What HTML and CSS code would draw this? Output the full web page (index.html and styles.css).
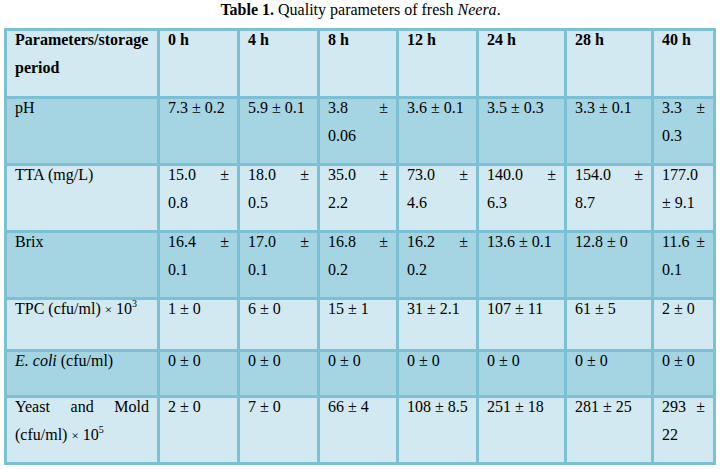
FILE: index.html
```html
<!DOCTYPE html>
<html lang="en">
<head>
  <meta charset="UTF-8" />
  <meta name="viewport" content="width=device-width, initial-scale=1.0" />
  <title>Table 1. Quality parameters of fresh Neera</title>
  <link rel="stylesheet" href="styles.css">
</head>
<body>
  <div class="page">
    <p class="caption"><strong>Table 1.</strong> Quality parameters of fresh <em>Neera</em>.</p>

    <table class="quality">
      <colgroup>
        <col class="c-param">
        <col class="c-77"><col class="c-77"><col class="c-76"><col class="c-77">
        <col class="c-85"><col class="c-84"><col class="c-59">
      </colgroup>
      <tr class="head tall">
        <th><p>Parameters/storage period</p></th>
        <th><p>0 h</p></th>
        <th><p>4 h</p></th>
        <th><p>8 h</p></th>
        <th><p>12 h</p></th>
        <th><p>24 h</p></th>
        <th><p>28 h</p></th>
        <th><p>40 h</p></th>
      </tr>
      <tr class="dark tall">
        <td><p>pH</p></td>
        <td><p>7.3 ± 0.2</p></td>
        <td><p>5.9 ± 0.1</p></td>
        <td><p>3.8 ± 0.06</p></td>
        <td><p>3.6 ± 0.1</p></td>
        <td><p>3.5 ± 0.3</p></td>
        <td><p>3.3 ± 0.1</p></td>
        <td><p>3.3 ± 0.3</p></td>
      </tr>
      <tr class="light tall">
        <td><p>TTA (mg/L)</p></td>
        <td><p>15.0 ± 0.8</p></td>
        <td><p>18.0 ± 0.5</p></td>
        <td><p>35.0 ± 2.2</p></td>
        <td><p>73.0 ± 4.6</p></td>
        <td><p>140.0 ± 6.3</p></td>
        <td><p>154.0 ± 8.7</p></td>
        <td><p>177.0 ± 9.1</p></td>
      </tr>
      <tr class="dark tall">
        <td><p>Brix</p></td>
        <td><p>16.4 ± 0.1</p></td>
        <td><p>17.0 ± 0.1</p></td>
        <td><p>16.8 ± 0.2</p></td>
        <td><p>16.2 ± 0.2</p></td>
        <td><p>13.6 ± 0.1</p></td>
        <td><p>12.8 ± 0</p></td>
        <td><p>11.6 ± 0.1</p></td>
      </tr>
      <tr class="light mid">
        <td><p>TPC (cfu/ml) <span class="times">×</span> 10<sup>3</sup></p></td>
        <td><p>1 ± 0</p></td>
        <td><p>6 ± 0</p></td>
        <td><p>15 ± 1</p></td>
        <td><p>31 ± 2.1</p></td>
        <td><p>107 ± 11</p></td>
        <td><p>61 ± 5</p></td>
        <td><p>2 ± 0</p></td>
      </tr>
      <tr class="dark short">
        <td><p><em>E. coli</em> (cfu/ml)</p></td>
        <td><p>0 ± 0</p></td>
        <td><p>0 ± 0</p></td>
        <td><p>0 ± 0</p></td>
        <td><p>0 ± 0</p></td>
        <td><p>0 ± 0</p></td>
        <td><p>0 ± 0</p></td>
        <td><p>0 ± 0</p></td>
      </tr>
      <tr class="light tall">
        <td><p>Yeast and Mold (cfu/ml) <span class="times">×</span> 10<sup>5</sup></p></td>
        <td><p>2 ± 0</p></td>
        <td><p>7 ± 0</p></td>
        <td><p>66 ± 4</p></td>
        <td><p>108 ± 8.5</p></td>
        <td><p>251 ± 18</p></td>
        <td><p>281 ± 25</p></td>
        <td><p>293 ± 22</p></td>
      </tr>
    </table>
  </div>
</body>
</html>
```

FILE: styles.css
```css
body {
  margin: 0;
  background: #fff;
  color: #000;
  font-family: "Liberation Serif", "Times New Roman", serif;
  font-size: 16px;
}

.page {
  padding: 0 4px;
}

.caption {
  margin: 0 0 8px;
  line-height: 20px;
  text-align: center;
}

.quality {
  width: 712px;
  table-layout: fixed;
  border-collapse: separate;
  border-spacing: 3px;
  background: #7bc0d4;
}

.c-param { width: 150px; }
.c-77 { width: 77px; }
.c-76 { width: 76px; }
.c-85 { width: 85px; }
.c-84 { width: 84px; }
.c-59 { width: 59px; }

.quality th,
.quality td {
  padding: 0 8px;
  vertical-align: top;
  text-align: justify;
  font-weight: normal;
}

.quality th {
  font-weight: bold;
}

.quality p {
  margin: -5px 0 0;
  line-height: 28px;
}

.head th,
.light td {
  background: #d2e9f1;
}

.dark td {
  background: #a5d4e2;
}

.tall th,
.tall td {
  height: 64px;
}

.head th {
  height: 65px;
}

.mid td {
  height: 49px;
}

.short td {
  height: 43px;
}

.times {
  font-size: 13px;
}

sup {
  font-size: 10px;
  line-height: 0;
  vertical-align: 7px;
}
```
